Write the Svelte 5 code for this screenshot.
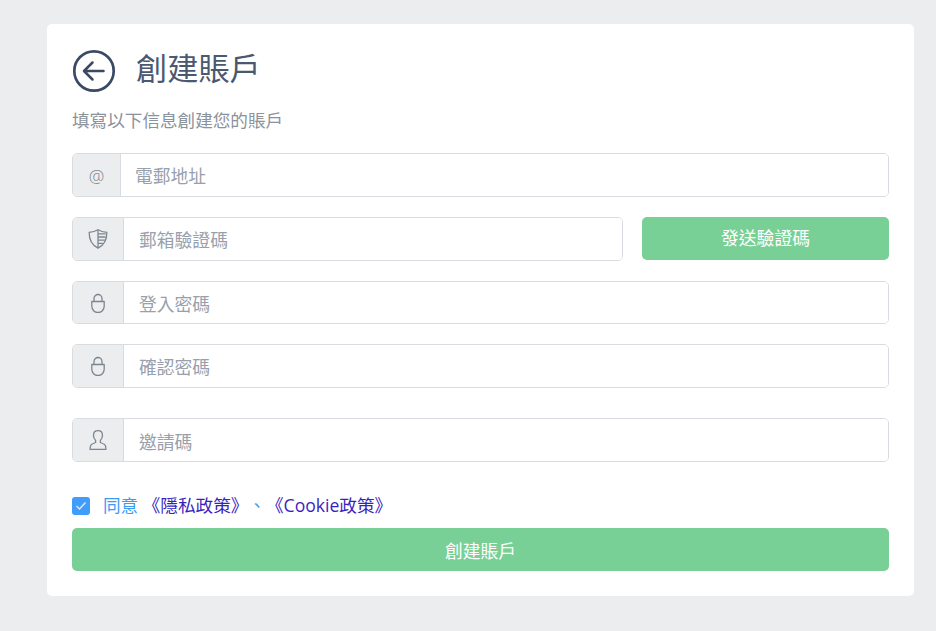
<script>
  let agreed = $state(true);
</script>

<main class="page">
  <section class="card">
    <header class="head">
      <button class="back" aria-label="back">
        <svg width="44" height="44" viewBox="0 0 44 44" fill="none" stroke="#3b4a63" stroke-width="2.700">
          <circle cx="22" cy="22" r="19.700" />
          <path d="M31.500 22H12.500M20.500 13.500L12 22l8.500 8.500" stroke-width="2.500" stroke-linecap="round" stroke-linejoin="round" />
        </svg>
      </button>
      <h1>創建賬戶</h1>
    </header>
    <p class="sub">填寫以下信息創建您的賬戶</p>

    <div class="group first">
      <span class="addon narrow"><span class="at">@</span></span>
      <input placeholder="電郵地址" />
    </div>

    <div class="code-row">
      <div class="group">
        <span class="addon">
          <svg width="20" height="20" viewBox="0 0 20 20" fill="none" stroke="#7d8690" stroke-width="1.300">
            <path d="M10 .8c2.700 1.600 5.400 2.300 8.800 2.500.2 7.300-2.300 12.600-8.800 15.900C3.500 15.900 1 10.600 1.200 3.300 4.600 3.100 7.300 2.400 10 .8z" />
            <path d="M10 1v18M10 4.800h7.600M10 8h7.600M10 11.200h6.800M10 14.400h4.800" />
          </svg>
        </span>
        <input placeholder="郵箱驗證碼" />
      </div>
      <button class="green send">發送驗證碼</button>
    </div>

    <div class="group pw">
      <span class="addon">
        <svg width="20" height="20" viewBox="0 0 20 20" fill="none" stroke="#7d8690" stroke-width="1.300">
          <path d="M6 8.500V5.500a4 4 0 0 1 8 0v3" />
          <path d="M3.800 8.500h12.400v4.800a6.200 6.200 0 0 1-12.400 0z" stroke-linejoin="round" />
        </svg>
      </span>
      <input placeholder="登入密碼" />
    </div>

    <div class="group pw2">
      <span class="addon">
        <svg width="20" height="20" viewBox="0 0 20 20" fill="none" stroke="#7d8690" stroke-width="1.300">
          <path d="M6 8.500V5.500a4 4 0 0 1 8 0v3" />
          <path d="M3.800 8.500h12.400v4.800a6.200 6.200 0 0 1-12.400 0z" stroke-linejoin="round" />
        </svg>
      </span>
      <input placeholder="確認密碼" />
    </div>

    <div class="group invite">
      <span class="addon">
        <svg width="20" height="20" viewBox="0 0 20 20" fill="none" stroke="#7d8690" stroke-width="1.300">
          <path d="M10 .7C7.200.7 5.500 2.800 5.500 5.500c0 2.200 1 3.700 2.100 4.900v2.100c-2.200.8-4.600 1.800-5.100 3.400L2 19.300h16l-.5-3.400c-.5-1.600-2.900-2.600-5.100-3.400v-2.100c1.100-1.200 2.100-2.700 2.100-4.900 0-2.700-1.700-4.800-4.500-4.800z" stroke-linejoin="round" />
        </svg>
      </span>
      <input placeholder="邀請碼" />
    </div>

    <label class="agree">
      <input type="checkbox" bind:checked={agreed} />
      <span class="box">
        <svg width="12" height="10" viewBox="0 0 12 10" fill="none" stroke="#dcecff" stroke-width="1.400"><path d="M1.500 5l3 3 6-6.500" /></svg>
      </span>
      <span class="text">同意 <a href="#privacy">《隱私政策》</a>、<a href="#cookie">《Cookie政策》</a></span>
    </label>

    <button class="green submit">創建賬戶</button>
  </section>
</main>

<style>
  :global(body) {
    background: #ebedef;
    font-family: "Open Sans", "Noto Sans CJK TC", sans-serif;
    text-spacing-trim: space-all;
  }

  .page {
    padding: 24px 22px 35px 47px;
    height: 631px;
    box-sizing: border-box;
    overflow: hidden;
  }

  .card {
    background: #fff;
    border-radius: 5px;
    height: 572px;
    box-sizing: border-box;
    padding: 26px 25px 25px;
  }

  .head {
    display: flex;
    align-items: center;
    gap: 20px;
    height: 42px;
  }

  .back {
    width: 44px;
    height: 44px;
    padding: 0;
    border: 0;
    background: none;
    display: block;
  }

  h1 {
    margin: -6px 0 0;
    font-size: 31.200px;
    line-height: 42px;
    font-weight: 400;
    color: #4a5870;
  }

  .sub {
    margin: 15px 0 0;
    font-size: 17.600px;
    line-height: 26px;
    color: #8a929c;
  }

  .group {
    display: flex;
    flex: 1;
    height: 44px;
    box-sizing: border-box;
    border: 1px solid #d8dbe0;
    border-radius: 5px;
    overflow: hidden;
    background: #fff;
  }

  .first { margin-top: 20px; }
  .pw { margin-top: 20px; height: 43px; }
  .pw2 { margin-top: 20px; }
  .invite { margin-top: 30px; }

  .addon {
    width: 51px;
    flex: none;
    display: flex;
    align-items: center;
    justify-content: center;
    background: #ebedef;
    border-right: 1px solid #d8dbe0;
    box-sizing: border-box;
  }

  .addon.narrow { width: 48px; }

  .at {
    font-size: 17.500px;
    color: #7d8690;
    font-weight: 300;
    padding-top: 2px;
  }

  .group input {
    flex: 1;
    min-width: 0;
    border: 0;
    outline: 0;
    padding: 2px 15px 0;
    font: inherit;
    font-size: 17.800px;
    color: #3b4a63;
  }

  .first input { padding-left: 14px; }
  .invite input { padding-top: 4px; }

  .group input::placeholder { color: #98a0ad; opacity: 1; }

  .code-row {
    display: flex;
    gap: 19px;
    margin-top: 20px;
    align-items: flex-start;
  }

  .code-row .group { flex: none; width: 551px; }

  .green {
    border: 0;
    background: #78d096;
    color: #fff;
    border-radius: 5px;
    font: inherit;
    font-size: 17.800px;
    padding: 0 0 3px;
  }

  .send {
    flex: 1;
    height: 43px;
  }

  .agree {
    display: flex;
    align-items: center;
    margin-top: 32px;
    height: 24px;
    font-size: 17.600px;
    color: #3b9cf5;
  }

  .agree input {
    position: absolute;
    opacity: 0;
    width: 0;
    height: 0;
  }

  .box {
    width: 18px;
    height: 18px;
    background: #419dfb;
    border-radius: 3px;
    display: flex;
    align-items: center;
    justify-content: center;
    margin-right: 13px;
  }

  .text { white-space: pre; margin-top: -4px; }

  .agree a {
    color: #3a1fc0;
    text-decoration: none;
  }

  .submit {
    display: block;
    width: 100%;
    height: 43px;
    margin-top: 10px;
    padding: 0;
  }
</style>
